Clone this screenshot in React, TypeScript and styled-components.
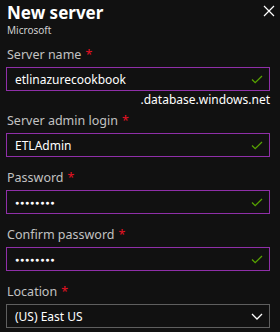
import React, { FunctionComponent } from 'react';
import styled, { createGlobalStyle } from 'styled-components';

const GlobalStyle = createGlobalStyle`
  html, body {
    margin: 0;
    background: #111111;
  }
  body {
    font-family: 'Noto Sans', 'Open Sans', sans-serif;
    color: #ffffff;
  }
`;

const Panel = styled.div`
  width: 280px;
  height: 332px;
  overflow: hidden;
  padding: 1px 10px 0 6px;
  box-sizing: border-box;
`;

const Header = styled.div`
  display: flex;
  justify-content: space-between;
  align-items: flex-start;
  height: 37px;
`;

const Title = styled.div`
  font-size: 17px;
  font-weight: 700;
  line-height: 23px;
  padding-left: 1px;
`;

const Subtitle = styled.div`
  font-size: 10px;
  line-height: 13px;
  color: #d0d0d0;
  padding-left: 1px;
`;

const CloseButton = styled.div`
  width: 12px;
  height: 12px;
  margin-top: 4px;
  margin-right: -5px;
  display: flex;
`;

const Field = styled.div<{ $gap?: number }>`
  display: flex;
  flex-direction: column;
  margin-top: ${(p) => p.$gap ?? 13}px;
`;

const Label = styled.div`
  font-size: 12.5px;
  line-height: 16px;
  color: #c2c2c2;
  margin-bottom: 4px;
  padding-left: 1px;
`;

const Required = styled.span`
  color: #e81123;
  margin-left: 4px;
`;

const InputBox = styled.div<{ $valid?: boolean }>`
  height: 24px;
  box-sizing: border-box;
  border: 1px solid ${(p) => (p.$valid ? '#8f2fa8' : '#5f5f5f')};
  display: flex;
  align-items: center;
  justify-content: space-between;
  padding: 0 6px 0 8px;
`;

const Value = styled.span<{ $secret?: boolean }>`
  color: #ffffff;
  font-size: ${(p) => (p.$secret ? '7px' : '12px')};
  letter-spacing: ${(p) => (p.$secret ? '0.8px' : '0')};
`;

const Suffix = styled.div`
  text-align: right;
  font-size: 12px;
  line-height: 16px;
  margin-top: 1px;
`;

const Check = () => (
  <svg width="12" height="9" viewBox="0 0 12 9">
    <path d="M1 4.5 L4.2 7.7 L11 1" fill="none" stroke="#57a300" strokeWidth="1.3" />
  </svg>
);

const Chevron = () => (
  <svg width="12" height="7" viewBox="0 0 12 7">
    <path d="M1 1 L6 6 L11 1" fill="none" stroke="#ffffff" strokeWidth="1.3" />
  </svg>
);

interface ITextField {
  label: string;
  value: string;
  secret?: boolean;
  gap?: number;
  suffix?: string;
}

const TextField: FunctionComponent<ITextField> = ({ label, value, secret, gap, suffix }) => (
  <Field $gap={gap}>
    <Label>
      {label}
      <Required>*</Required>
    </Label>
    <InputBox $valid>
      <Value $secret={secret}>{secret ? '●●●●●●●●' : value}</Value>
      <Check />
    </InputBox>
    {suffix && <Suffix>{suffix}</Suffix>}
  </Field>
);

export default function App() {
  return (
    <>
      <GlobalStyle />
      <Panel>
        <Header>
          <div>
            <Title>New server</Title>
            <Subtitle>Microsoft</Subtitle>
          </div>
          <CloseButton>
            <svg width="12" height="12" viewBox="0 0 12 12">
              <path d="M1 1 L11 11 M11 1 L1 11" stroke="#ffffff" strokeWidth="1.2" />
            </svg>
          </CloseButton>
        </Header>
        <TextField label="Server name" value="etlinazurecookbook" gap={9} suffix=".database.windows.net" />
        <TextField label="Server admin login" value="ETLAdmin" gap={5} />
        <TextField label="Password" value="password" secret />
        <TextField label="Confirm password" value="password" secret />
        <Field>
          <Label>
            Location
            <Required>*</Required>
          </Label>
          <InputBox>
            <Value>(US) East US</Value>
            <Chevron />
          </InputBox>
        </Field>
      </Panel>
    </>
  );
}
